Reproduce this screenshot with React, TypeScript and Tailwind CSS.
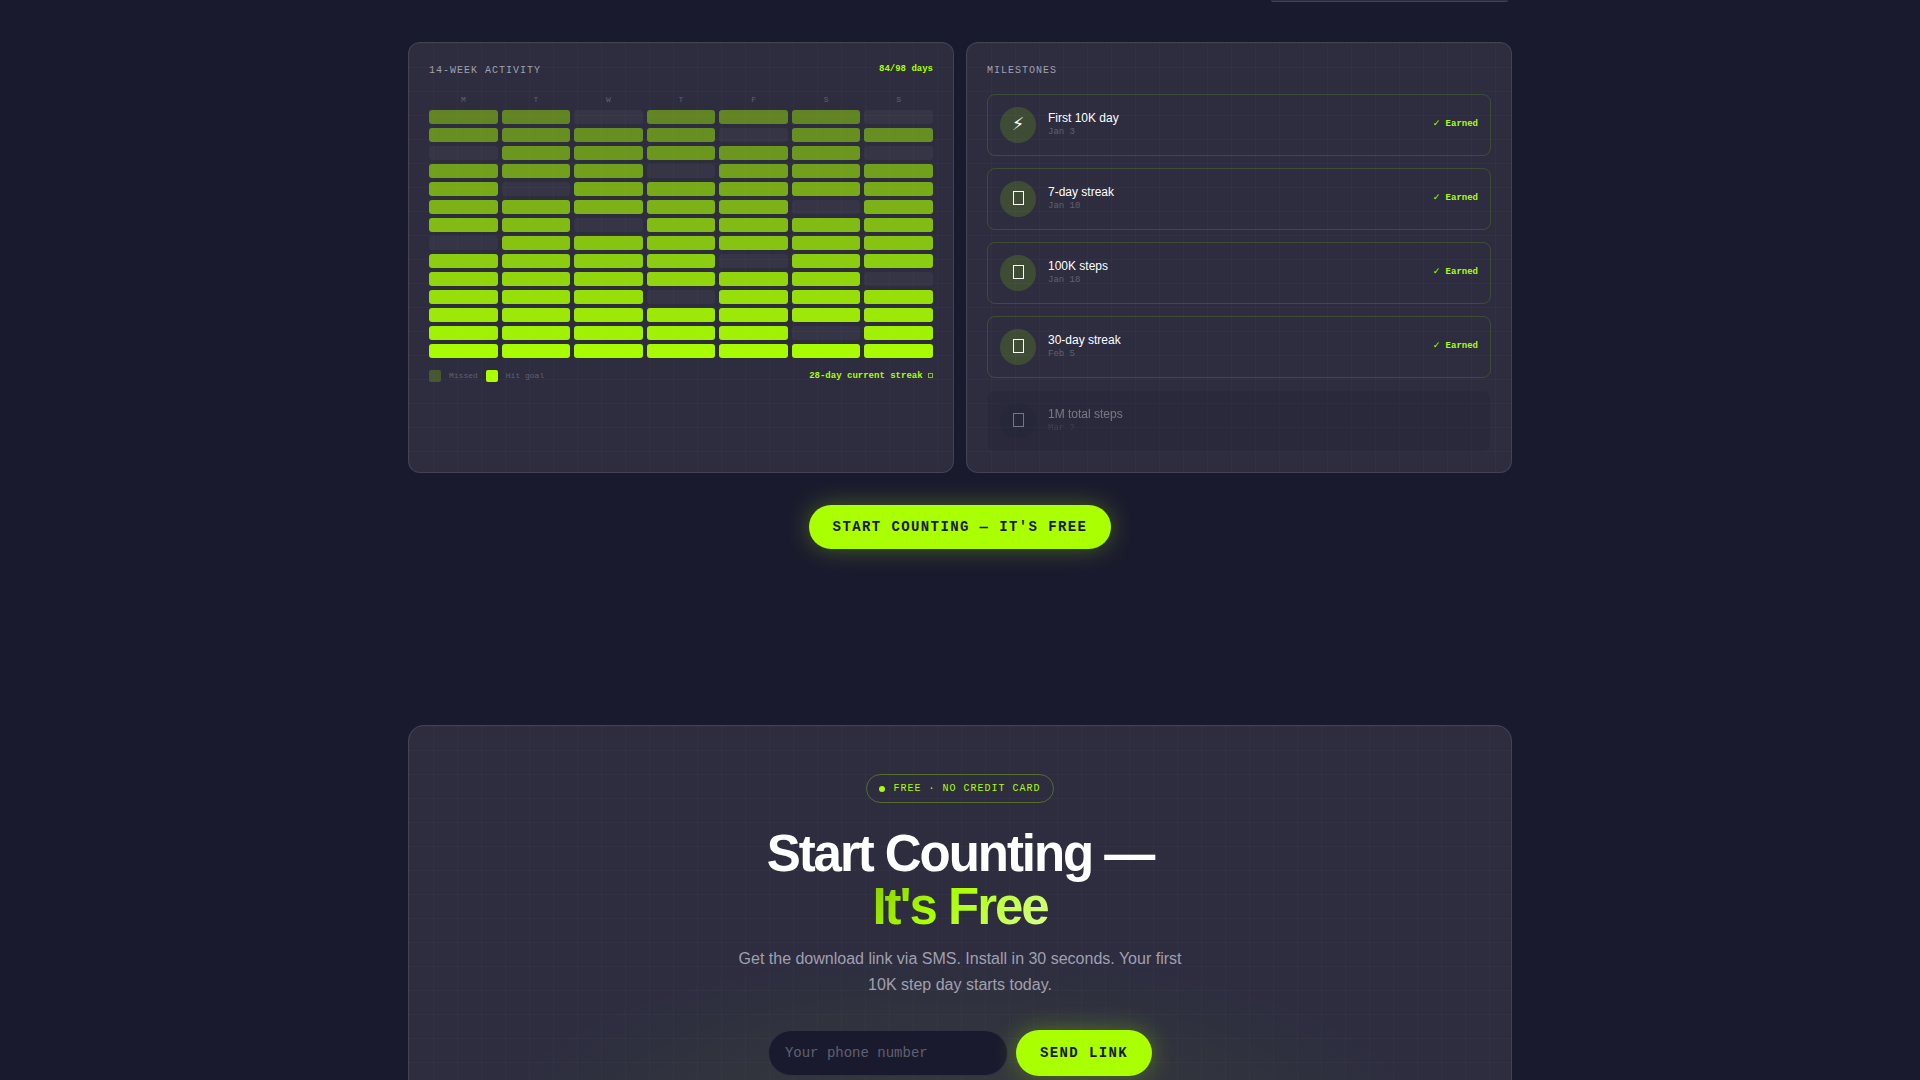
import clsx from 'clsx';

const DAYS = ['M', 'T', 'W', 'T', 'F', 'S', 'S'];

// 1 = goal hit, 0 = missed
const WEEKS = [
  '1101110',
  '1111011',
  '0111110',
  '1110111',
  '1011111',
  '1111101',
  '1101111',
  '0111111',
  '1111011',
  '1111110',
  '1110111',
  '1111111',
  '1111101',
  '1111111',
];

interface Milestone {
  icon?: string;
  title: string;
  date: string;
  earned: boolean;
}

const MILESTONES: Milestone[] = [
  { icon: '⚡\uFE0E', title: 'First 10K day', date: 'Jan 3', earned: true },
  { title: '7-day streak', date: 'Jan 10', earned: true },
  { title: '100K steps', date: 'Jan 18', earned: true },
  { title: '30-day streak', date: 'Feb 5', earned: true },
  { title: '1M total steps', date: 'Mar ?', earned: false },
];

const MONO = "font-['Liberation_Mono',monospace]";
const GRID_BG =
  'bg-[#2d2d3f] bg-[linear-gradient(rgba(255,255,255,0.02)_1px,transparent_1px),linear-gradient(90deg,rgba(255,255,255,0.02)_1px,transparent_1px)] bg-size-[24px_24px]';

export default function App() {
  return (
    <div className="min-h-screen overflow-hidden bg-[#1a1a2e] font-['Liberation_Sans',sans-serif] text-white">
      <main className="mx-auto max-w-[1104px]">
        {/* Tail of the card row above */}
        <div className="flex justify-end">
          <div className="h-[2px] w-[245px] px-1">
            <div className="h-full rounded-b-sm border-b border-white/10 bg-[#2d2d3f]" />
          </div>
        </div>

        <section className="mt-10 grid grid-cols-2 gap-3">
          <ActivityCard />
          <MilestonesCard />
        </section>

        <div className="mt-8 flex justify-center">
          <LimeButton className="h-11">START COUNTING — IT'S FREE</LimeButton>
        </div>

        <SignupCard />
      </main>
    </div>
  );
}

// ─── Activity ────────────────────────────────────────────────────────────────

function ActivityCard() {
  return (
    <div className={clsx(GRID_BG, 'rounded-xl border border-white/10 p-5')}>
      <div className="mb-4 flex h-[15px] items-start justify-between">
        <h3 className={clsx(MONO, 'text-[10px] leading-[15px] tracking-widest text-[#a0a0b0]')}>14-WEEK ACTIVITY</h3>
        <span className={clsx(MONO, 'text-[9px] leading-3 font-bold text-[#aaff00]')}>84/98 days</span>
      </div>

      <div className="grid grid-cols-7 gap-1">
        {DAYS.map((d, i) => (
          <span key={i} className={clsx(MONO, 'text-center text-[8px] leading-3 text-[#606070]')}>
            {d}
          </span>
        ))}
        {WEEKS.map((week, w) =>
          week.split('').map((hit, d) => (
            <div
              key={`${w}-${d}`}
              className={clsx('h-3.5 rounded-[3px]', hit === '1' ? 'bg-[#aaff00]' : 'bg-white/4')}
              style={hit === '1' ? { opacity: 0.42 + (w / 13) * 0.56 } : undefined}
            />
          ))
        )}
      </div>

      <div className={clsx(MONO, 'mt-3 flex items-center justify-between')}>
        <div className="flex items-center gap-2 text-[8px] leading-[10px] text-[#606070]">
          <span className="size-3 rounded-[2px] bg-[#aaff00]/20" />
          <span>Missed</span>
          <span className="size-3 rounded-[2px] bg-[#aaff00]" />
          <span>Hit goal</span>
        </div>
        <span className="text-[9px] leading-[10px] font-bold text-[#aaff00]">
          28-day current streak <span className="inline-block h-[5px] w-[5px] border border-[#aaff00]/70" />
        </span>
      </div>
    </div>
  );
}

// ─── Milestones ──────────────────────────────────────────────────────────────

function MilestonesCard() {
  return (
    <div className={clsx(GRID_BG, 'rounded-xl border border-white/10 p-5')}>
      <h3 className={clsx(MONO, 'mb-4 text-[10px] leading-[15px] tracking-widest text-[#a0a0b0]')}>MILESTONES</h3>
      <ul className="space-y-3">
        {MILESTONES.map((m) => (
          <li
            key={m.title}
            className={clsx(
              'flex items-center gap-3 rounded-lg border p-3',
              m.earned ? 'border-[#aaff00]/15' : 'border-white/5 bg-[#1a1a2e]/60 opacity-35'
            )}
          >
            <span
              className={clsx(
                "flex size-9 items-center justify-center rounded-full pb-0.5 font-['DejaVu_Sans',sans-serif] text-lg",
                m.earned ? 'bg-[#aaff00]/15' : 'bg-[#1a1a2e]/40'
              )}
            >
              {m.icon ?? <span className="h-3.5 w-[11px] border border-white" />}
            </span>
            <div className="flex-1 pb-1">
              <p className="text-xs leading-[18px]">{m.title}</p>
              <p className={clsx(MONO, 'text-[9px] leading-[10px] text-[#606070]')}>{m.date}</p>
            </div>
            {m.earned && (
              <span className={clsx(MONO, 'pb-1 text-[9px] leading-[10px] font-bold text-[#aaff00]')}>
                <span className="font-['DejaVu_Sans',sans-serif]">✓</span> Earned
              </span>
            )}
          </li>
        ))}
      </ul>
    </div>
  );
}

// ─── Signup ──────────────────────────────────────────────────────────────────

function SignupCard() {
  return (
    <section className={clsx(GRID_BG, 'relative mt-44 mb-24 overflow-hidden rounded-2xl border border-white/10 px-12 pt-12 pb-16 text-center')}>
      <div className="pointer-events-none absolute inset-0 bg-[radial-gradient(ellipse_44%_46%_at_50%_100%,rgba(170,255,0,0.08),transparent)]" />

      <div className="relative flex flex-col items-center">
        <div className={clsx(MONO, 'mb-6 flex items-center gap-2 rounded-full border border-[#aaff00]/30 px-3 py-1.5 text-[10px] leading-[15px] tracking-widest text-[#aaff00]')}>
          <span className="size-1.5 rounded-full bg-[#aaff00]" />
          FREE · NO CREDIT CARD
        </div>

        <h2 className="mb-[13px] text-[51px] leading-[53px] font-bold tracking-[-0.04em]">
          Start Counting —
          <br />
          <span className="bg-[linear-gradient(135deg,#88cc00,#aaff00_40%,#ddff99)] bg-clip-text text-transparent">
            It's Free
          </span>
        </h2>

        <p className="mb-8 max-w-[448px] text-base leading-[26px] text-[#a0a0b0]">
          Get the download link via SMS. Install in 30 seconds. Your first 10K step day starts today.
        </p>

        <form className="flex justify-center gap-2" onSubmit={(e) => e.preventDefault()}>
          <input
            type="tel"
            aria-label="Phone number"
            placeholder="Your phone number"
            className={clsx(MONO, 'h-[46px] w-60 rounded-full border border-white/10 bg-[#1a1a2e] px-4 text-sm text-white outline-none placeholder:text-[#606070]')}
          />
          <LimeButton className="h-[46px]">SEND LINK</LimeButton>
        </form>
      </div>
    </section>
  );
}

function LimeButton({ className, children }: { className: string; children: string }) {
  return (
    <button
      className={clsx(
        MONO,
        className,
        'rounded-full bg-[#aaff00] px-6 text-sm font-bold tracking-widest text-[#1a1a2e] shadow-[0_0_24px_rgba(170,255,0,0.3)]'
      )}
    >
      {children}
    </button>
  );
}
